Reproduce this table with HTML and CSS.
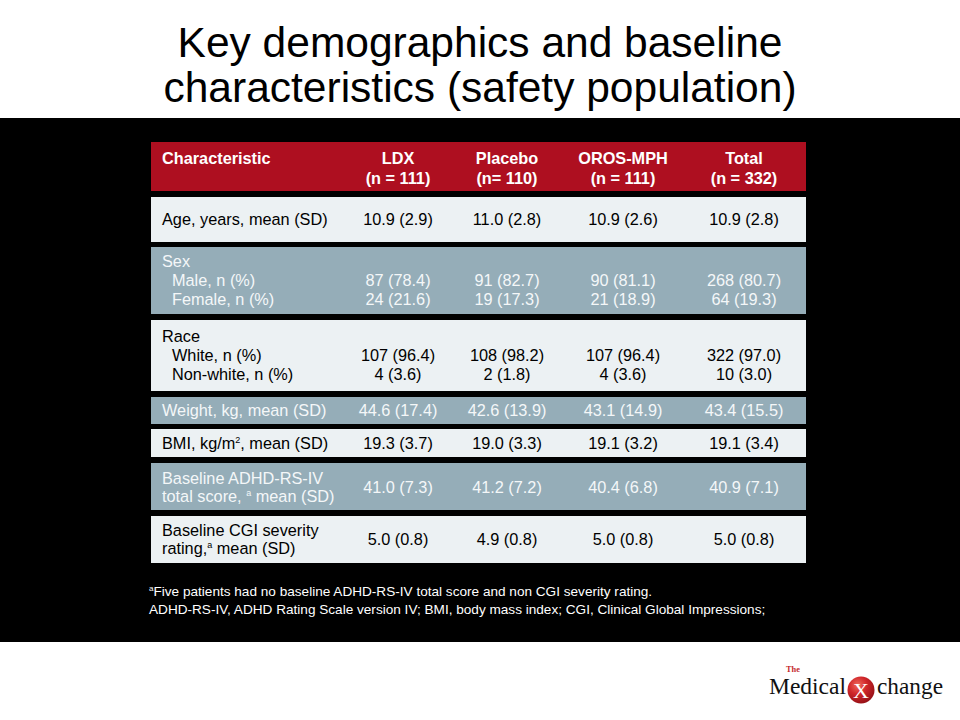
FILE: index.html
```html
<!DOCTYPE html>
<html lang="en">
<head>
<meta charset="utf-8">
<title>Key demographics and baseline characteristics</title>
<link rel="stylesheet" href="styles.css">
</head>
<body>
<div class="slide">
  <header class="title-area">
    <h1 class="title">Key demographics and baseline<br>characteristics (safety population)</h1>
  </header>
  <main class="band">
    <div class="table">
      <div class="row head">
        <div class="cell first">Characteristic</div>
        <div class="cell">LDX<br>(n = 111)</div>
        <div class="cell">Placebo<br>(n= 110)</div>
        <div class="cell">OROS-MPH<br>(n = 111)</div>
        <div class="cell">Total<br>(n = 332)</div>
      </div>
      <div class="row light r-age">
        <div class="cell first">Age, years, mean (SD)</div>
        <div class="cell">10.9 (2.9)</div>
        <div class="cell">11.0 (2.8)</div>
        <div class="cell">10.9 (2.6)</div>
        <div class="cell">10.9 (2.8)</div>
      </div>
      <div class="row dark r-sex">
        <div class="cell first">Sex<br><span class="sub">Male, n (%)</span><br><span class="sub">Female, n (%)</span></div>
        <div class="cell">&nbsp;<br>87 (78.4)<br>24 (21.6)</div>
        <div class="cell">&nbsp;<br>91 (82.7)<br>19 (17.3)</div>
        <div class="cell">&nbsp;<br>90 (81.1)<br>21 (18.9)</div>
        <div class="cell">&nbsp;<br>268 (80.7)<br>64 (19.3)</div>
      </div>
      <div class="row light r-race">
        <div class="cell first">Race<br><span class="sub">White, n (%)</span><br><span class="sub">Non-white, n (%)</span></div>
        <div class="cell">&nbsp;<br>107 (96.4)<br>4 (3.6)</div>
        <div class="cell">&nbsp;<br>108 (98.2)<br>2 (1.8)</div>
        <div class="cell">&nbsp;<br>107 (96.4)<br>4 (3.6)</div>
        <div class="cell">&nbsp;<br>322 (97.0)<br>10 (3.0)</div>
      </div>
      <div class="row dark r-weight">
        <div class="cell first">Weight, kg, mean (SD)</div>
        <div class="cell">44.6 (17.4)</div>
        <div class="cell">42.6 (13.9)</div>
        <div class="cell">43.1 (14.9)</div>
        <div class="cell">43.4 (15.5)</div>
      </div>
      <div class="row light r-bmi">
        <div class="cell first">BMI, kg/m<sup class="sup">2</sup>, mean (SD)</div>
        <div class="cell">19.3 (3.7)</div>
        <div class="cell">19.0 (3.3)</div>
        <div class="cell">19.1 (3.2)</div>
        <div class="cell">19.1 (3.4)</div>
      </div>
      <div class="row dark r-two">
        <div class="cell first">Baseline ADHD-RS-IV<br>total score, <sup class="sup">a</sup> mean (SD)</div>
        <div class="cell">41.0 (7.3)</div>
        <div class="cell">41.2 (7.2)</div>
        <div class="cell">40.4 (6.8)</div>
        <div class="cell">40.9 (7.1)</div>
      </div>
      <div class="row light r-two">
        <div class="cell first">Baseline CGI severity<br>rating,<sup class="sup">a</sup> mean (SD)</div>
        <div class="cell">5.0 (0.8)</div>
        <div class="cell">4.9 (0.8)</div>
        <div class="cell">5.0 (0.8)</div>
        <div class="cell">5.0 (0.8)</div>
      </div>
    </div>
    <div class="notes">
      <p><sup class="sup-note">a</sup>Five patients had no baseline ADHD-RS-IV total score and non CGI severity rating.</p>
      <p>ADHD-RS-IV, ADHD Rating Scale version IV; BMI, body mass index; CGI, Clinical Global Impressions;</p>
    </div>
  </main>
  <footer class="footer">
    <svg class="logo" width="182" height="44" viewBox="0 0 182 44" aria-label="The Medical Xchange">
      <defs>
        <radialGradient id="ball" cx="0.38" cy="0.32" r="0.75">
          <stop offset="0" stop-color="#F06A5C"/>
          <stop offset="0.45" stop-color="#D0262A"/>
          <stop offset="1" stop-color="#8E0E14"/>
        </radialGradient>
      </defs>
      <text x="20" y="8" class="logo-the" textLength="14" lengthAdjust="spacingAndGlyphs">The</text>
      <text x="3" y="30" class="logo-word" textLength="77" lengthAdjust="spacingAndGlyphs">Medical</text>
      <circle cx="95" cy="26" r="13.5" fill="url(#ball)"/>
      <text x="95" y="34" class="logo-x" text-anchor="middle">X</text>
      <text x="111" y="30" class="logo-word" textLength="66" lengthAdjust="spacingAndGlyphs">change</text>
    </svg>
  </footer>
</div>
</body>
</html>
```
FILE: styles.css
```css
* { box-sizing: border-box; }
html, body { margin: 0; padding: 0; background: #ffffff; }
.slide {
  width: 960px;
  height: 720px;
  display: flex;
  flex-direction: column;
  font-family: "Liberation Sans", Arial, sans-serif;
}
.title-area {
  height: 118px;
  padding-top: 20px;
  text-align: center;
}
.title {
  margin: 0;
  font-weight: normal;
  font-size: 42.5px;
  line-height: 45px;
  color: #000;
}
.band {
  height: 524px;
  background: #000;
  padding: 24px 0 0 149px;
}
.table {
  width: 655px;
  margin-left: 2px;
  display: flex;
  flex-direction: column;
  gap: 5.7px;
}
.row {
  display: grid;
  grid-template-columns: 195px 104px 114px 118px 124px;
  align-items: center;
  font-size: 16.3px;
  line-height: 19px;
}
.cell { text-align: center; white-space: nowrap; }
.cell.first { text-align: left; padding-left: 11px; }
.sub { padding-left: 10px; }
.head {
  background: #AE0F20;
  color: #fff;
  font-weight: bold;
  font-size: 16.3px;
  line-height: 20px;
  align-items: start;
  padding: 6px 0 3px;
}
.light { background: #ECF1F3; color: #000; }
.dark { background: #95ADB8; color: #F4F7F8; }
.r-age { padding: 13px 0; }
.r-sex { padding: 5px 0; }
.r-race { padding: 7px 0; }
.r-weight { padding: 4px 0; }
.r-bmi { padding: 4.5px 0; }
.r-two { padding: 5.5px 0; line-height: 18px; }
.sup { font-size: 9px; vertical-align: 6px; line-height: 0; }
.notes {
  margin-top: 20px;
  color: #fff;
  font-size: 13.6px;
  line-height: 18px;
}
.notes p { margin: 0; white-space: nowrap; }
.sup-note { font-size: 8px; vertical-align: 5px; line-height: 0; }
.footer {
  flex: 1;
  display: flex;
  justify-content: flex-end;
  align-items: flex-start;
  padding: 22px 12px 0 0;
}
.logo-the {
  font-family: "Liberation Serif", "Times New Roman", serif;
  font-size: 9px;
  font-weight: bold;
  fill: #C52A2E;
}
.logo-word {
  font-family: "Liberation Serif", "Times New Roman", serif;
  font-size: 24px;
  fill: #111;
}
.logo-x {
  font-family: "Liberation Serif", "Times New Roman", serif;
  font-size: 22px;
  fill: #fff;
}
```
